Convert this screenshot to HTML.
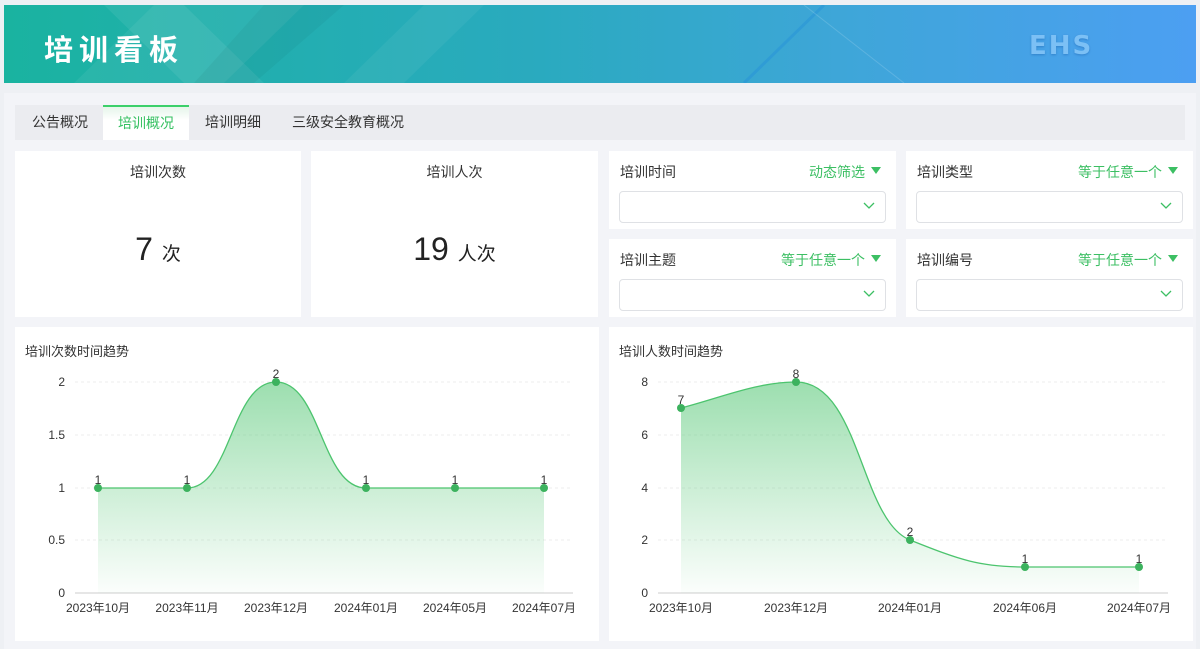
<!DOCTYPE html>
<html><head><meta charset="utf-8"><style>
*{margin:0;padding:0;box-sizing:border-box}
body{width:1200px;height:649px;background:#eef0f4;font-family:"Liberation Sans","Noto Sans CJK SC",sans-serif;position:relative;overflow:hidden;color:#333}
.panel{position:absolute;left:4px;top:93px;width:1192px;height:556px;background:#f3f4f8}
.banner{position:absolute;left:4px;top:5px;width:1192px;height:78px;background:linear-gradient(90deg,#1ab3a0 0%,#2aaabf 45%,#3ea6d8 70%,#4c9ff2 100%);overflow:hidden}
.banner h1{position:absolute;left:40px;top:22px;color:#fff;font-size:29px;letter-spacing:6px;font-weight:bold}
.ehs{position:absolute;left:1025px;top:26px;color:#7cc0f5;font-size:26px;font-weight:bold;letter-spacing:2px;font-family:"DejaVu Sans",sans-serif;text-shadow:0 1px 2px rgba(0,60,140,.3)}
.tabs{position:absolute;left:15px;top:105px;width:1170px;height:35px;background:#ebecf0}
.tab{position:absolute;top:0;height:35px;line-height:35px;font-size:14px;color:#333}
.tab.on{background:linear-gradient(#e6f5ea,#fff 40%);color:#34c060;border-top:2px solid #3ccf6a;line-height:33px;text-align:center}
.card{position:absolute;background:#fff}
.st{font-size:14px;text-align:center;padding-top:11px;color:#333}
.big{position:absolute;width:100%;text-align:center;top:80px;font-size:32px;color:#222}
.big span{font-size:19px}
.fl{position:absolute;left:11px;top:11px;font-size:14px}
.fr{position:absolute;right:15px;top:11px;font-size:14px;color:#3cbf63}
.fr:after{content:"";display:inline-block;margin-left:6px;border:5px solid transparent;border-top:7px solid #3cbf63;vertical-align:-2px}
.sel{position:absolute;left:10px;right:10px;top:40px;height:32px;border:1px solid #dfe1e5;border-radius:4px}
.sel svg{position:absolute;right:10px;top:10px}
.ct{position:absolute;left:10px;top:14px;font-size:13px;color:#333}
</style></head><body>
<div class="panel"></div>
<div class="banner">
<svg width="1192" height="78" style="position:absolute;left:0;top:0">
<polygon points="100,0 180,0 260,78 180,78" fill="#fff" opacity=".07"/>
<polygon points="150,0 300,0 220,78 70,78" fill="#fff" opacity=".06"/>
<polygon points="260,0 340,0 250,78 190,78" fill="#000" opacity=".04"/>
<polygon points="420,0 480,0 400,78 340,78" fill="#fff" opacity=".05"/>
<line x1="820" y1="0" x2="740" y2="78" stroke="#2a96d8" stroke-width="3" opacity=".6"/>
<line x1="800" y1="0" x2="900" y2="78" stroke="#fff" stroke-width="1" opacity=".15"/>
</svg>
<h1>培训看板</h1><div class="ehs">EHS</div></div>
<div class="tabs">
<div class="tab" style="left:17px">公告概况</div>
<div class="tab on" style="left:88px;width:86px">培训概况</div>
<div class="tab" style="left:190px">培训明细</div>
<div class="tab" style="left:277px">三级安全教育概况</div>
</div>
<div class="card" style="left:15px;top:151px;width:286px;height:166px"><div class="st">培训次数</div><div class="big">7 <span>次</span></div></div>
<div class="card" style="left:311px;top:151px;width:287px;height:166px"><div class="st">培训人次</div><div class="big">19 <span>人次</span></div></div>
<div class="card" style="left:609px;top:151px;width:287px;height:78px"><div class="fl">培训时间</div><div class="fr">动态筛选</div><div class="sel"><svg width="12" height="8"><path d="M1 1L6 6L11 1" stroke="#3cbf63" fill="none" stroke-width="1.3"/></svg></div></div>
<div class="card" style="left:906px;top:151px;width:287px;height:78px"><div class="fl">培训类型</div><div class="fr">等于任意一个</div><div class="sel"><svg width="12" height="8"><path d="M1 1L6 6L11 1" stroke="#3cbf63" fill="none" stroke-width="1.3"/></svg></div></div>
<div class="card" style="left:609px;top:239px;width:287px;height:78px"><div class="fl">培训主题</div><div class="fr">等于任意一个</div><div class="sel"><svg width="12" height="8"><path d="M1 1L6 6L11 1" stroke="#3cbf63" fill="none" stroke-width="1.3"/></svg></div></div>
<div class="card" style="left:906px;top:239px;width:287px;height:78px"><div class="fl">培训编号</div><div class="fr">等于任意一个</div><div class="sel"><svg width="12" height="8"><path d="M1 1L6 6L11 1" stroke="#3cbf63" fill="none" stroke-width="1.3"/></svg></div></div>

<div class="card" style="left:15px;top:327px;width:584px;height:314px"><div class="ct">培训次数时间趋势</div></div>
<div class="card" style="left:609px;top:327px;width:584px;height:314px"><div class="ct">培训人数时间趋势</div></div>

<svg width="1200" height="649" style="position:absolute;left:0;top:0" font-family="Liberation Sans,sans-serif" font-size="12" fill="#333">
<defs><linearGradient id="g" x1="0" y1="0" x2="0" y2="1"><stop offset="0" stop-color="#4cc46e" stop-opacity=".55"/><stop offset="1" stop-color="#4cc46e" stop-opacity=".02"/></linearGradient></defs>
<g stroke="#eee" stroke-dasharray="3,3"><line x1="75" y1="382" x2="573" y2="382"/><line x1="75" y1="435" x2="573" y2="435"/><line x1="75" y1="488" x2="573" y2="488"/><line x1="75" y1="540" x2="573" y2="540"/>
<line x1="658" y1="382" x2="1168" y2="382"/><line x1="658" y1="435" x2="1168" y2="435"/><line x1="658" y1="488" x2="1168" y2="488"/><line x1="658" y1="540" x2="1168" y2="540"/></g>
<line x1="75" y1="593" x2="573" y2="593" stroke="#ccc"/><line x1="658" y1="593" x2="1168" y2="593" stroke="#ccc"/>
<g text-anchor="end"><text x="65" y="386">2</text><text x="65" y="439">1.5</text><text x="65" y="492">1</text><text x="65" y="544">0.5</text><text x="65" y="597">0</text>
<text x="648" y="386">8</text><text x="648" y="439">6</text><text x="648" y="492">4</text><text x="648" y="544">2</text><text x="648" y="597">0</text></g>
<path d="M98 488L187 488C231 488 231 382 276 382C321 382 321 488 366 488L544 488L544 593L98 593Z" fill="url(#g)"/>
<path d="M98 488L187 488C231 488 231 382 276 382C321 382 321 488 366 488L544 488" stroke="#4cc46e" fill="none" stroke-width="1.3"/>
<path d="M681 408C720 398 757 382 796 382C860 382 860 520 910 540C960 560 980 567 1025 567L1139 567L1139 593L681 593Z" fill="url(#g)"/>
<path d="M681 408C720 398 757 382 796 382C860 382 860 520 910 540C960 560 980 567 1025 567L1139 567" stroke="#4cc46e" fill="none" stroke-width="1.3"/>
<g fill="#3cb25e"><circle cx="98" cy="488" r="4"/><circle cx="187" cy="488" r="4"/><circle cx="276" cy="382" r="4"/><circle cx="366" cy="488" r="4"/><circle cx="455" cy="488" r="4"/><circle cx="544" cy="488" r="4"/>
<circle cx="681" cy="408" r="4"/><circle cx="796" cy="382" r="4"/><circle cx="910" cy="540" r="4"/><circle cx="1025" cy="567" r="4"/><circle cx="1139" cy="567" r="4"/></g>
<g text-anchor="middle"><text x="98" y="484">1</text><text x="187" y="484">1</text><text x="276" y="378">2</text><text x="366" y="484">1</text><text x="455" y="484">1</text><text x="544" y="484">1</text>
<text x="681" y="404">7</text><text x="796" y="378">8</text><text x="910" y="536">2</text><text x="1025" y="563">1</text><text x="1139" y="563">1</text>
<text x="98" y="612">2023年10月</text><text x="187" y="612">2023年11月</text><text x="276" y="612">2023年12月</text><text x="366" y="612">2024年01月</text><text x="455" y="612">2024年05月</text><text x="544" y="612">2024年07月</text>
<text x="681" y="612">2023年10月</text><text x="796" y="612">2023年12月</text><text x="910" y="612">2024年01月</text><text x="1025" y="612">2024年06月</text><text x="1139" y="612">2024年07月</text></g>
</svg>
</body></html>
